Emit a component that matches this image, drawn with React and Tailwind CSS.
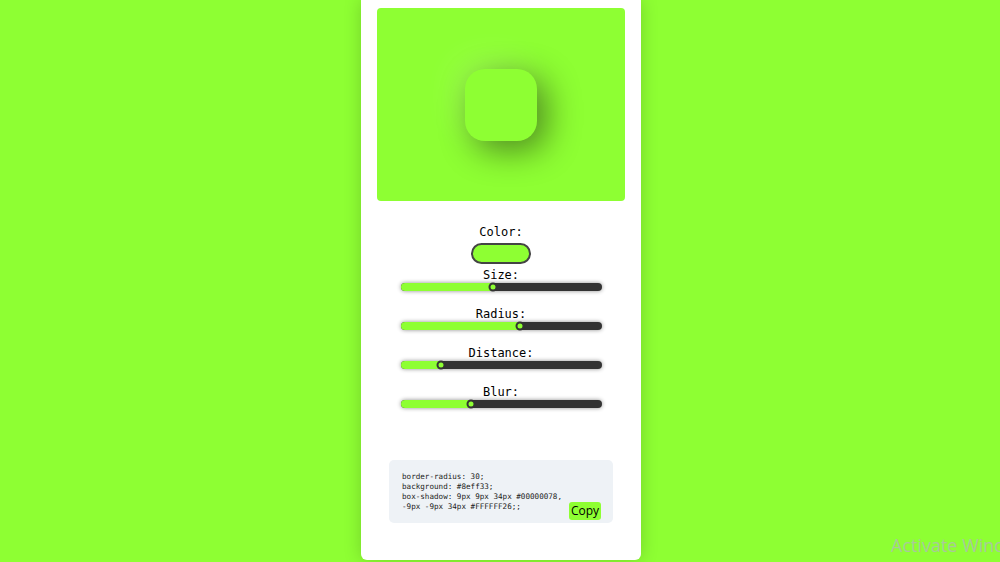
import React from "react";

const sliders = [
  { label: "Size:", value: 46 },
  { label: "Radius:", value: 59.5 },
  { label: "Distance:", value: 20 },
  { label: "Blur:", value: 35 },
];

function Slider({ value }) {
  return (
    <div className="relative h-[8px] w-[201px] rounded-full bg-[#333333] shadow-[0_0_4px_rgba(0,0,0,0.45)]">
      <div
        className="absolute left-0 top-0 h-full rounded-full bg-[#8eff33]"
        style={{ width: `${value}%` }}
      />
      <div
        className="absolute top-1/2 h-[9px] w-[9px] -translate-x-1/2 -translate-y-1/2 rounded-full border-2 border-[#333333] bg-[#8eff33]"
        style={{ left: `${value}%` }}
      />
    </div>
  );
}

export default function App() {
  return (
    <div className="relative min-h-[562px] overflow-hidden bg-[#8eff33] pl-[2px]">
      <div className="mx-auto flex h-[560px] w-[280px] flex-col items-center rounded-b-[6px] bg-white px-4 pt-2 shadow-[0_0_18px_rgba(0,0,0,0.18)]">
        <div className="flex h-[193px] w-full items-center justify-center rounded-[4px] bg-[#8eff33]">
          <div className="h-[72px] w-[72px] rounded-[20px] bg-[#8eff33] shadow-[9px_9px_34px_#00000078,-9px_-9px_34px_#FFFFFF26]" />
        </div>

        <div className="mt-[23px] flex flex-col items-center font-['DejaVu_Sans_Mono',monospace] text-[12px] leading-[16px] text-black">
          <span>Color:</span>
          <div className="mt-[3px] h-[21px] w-[60px] rounded-full border-2 border-[#444444] bg-[#8eff33]" />
          <div className="mt-[3px] flex flex-col items-center gap-[15px]">
            {sliders.map((s) => (
              <div key={s.label} className="flex flex-col items-center">
                <span>{s.label}</span>
                <Slider value={s.value} />
              </div>
            ))}
          </div>
        </div>

        <div className="relative mt-[52px] h-[63px] w-[224px] rounded-[5px] bg-[#eef2f6] px-[13px] pt-[12px] font-['DejaVu_Sans_Mono',monospace] text-[7.6px] leading-[10px] text-[#222222]">
          <div>border-radius: 30;</div>
          <div>background: #8eff33;</div>
          <div>box-shadow: 9px 9px 34px #00000078,</div>
          <div>-9px -9px 34px #FFFFFF26;;</div>
          <button className="absolute bottom-[3px] right-[12px] h-[18px] w-[32px] rounded-[3px] bg-[#8eff33] font-['Open_Sans',sans-serif] text-[12px] leading-[18px] text-black">
            Copy
          </button>
        </div>
      </div>

      <div className="absolute left-[891px] top-[533px] whitespace-nowrap font-['Open_Sans',sans-serif] text-[18px] leading-[24px] text-[#a9c99a]">
        Activate Windows
      </div>
    </div>
  );
}
